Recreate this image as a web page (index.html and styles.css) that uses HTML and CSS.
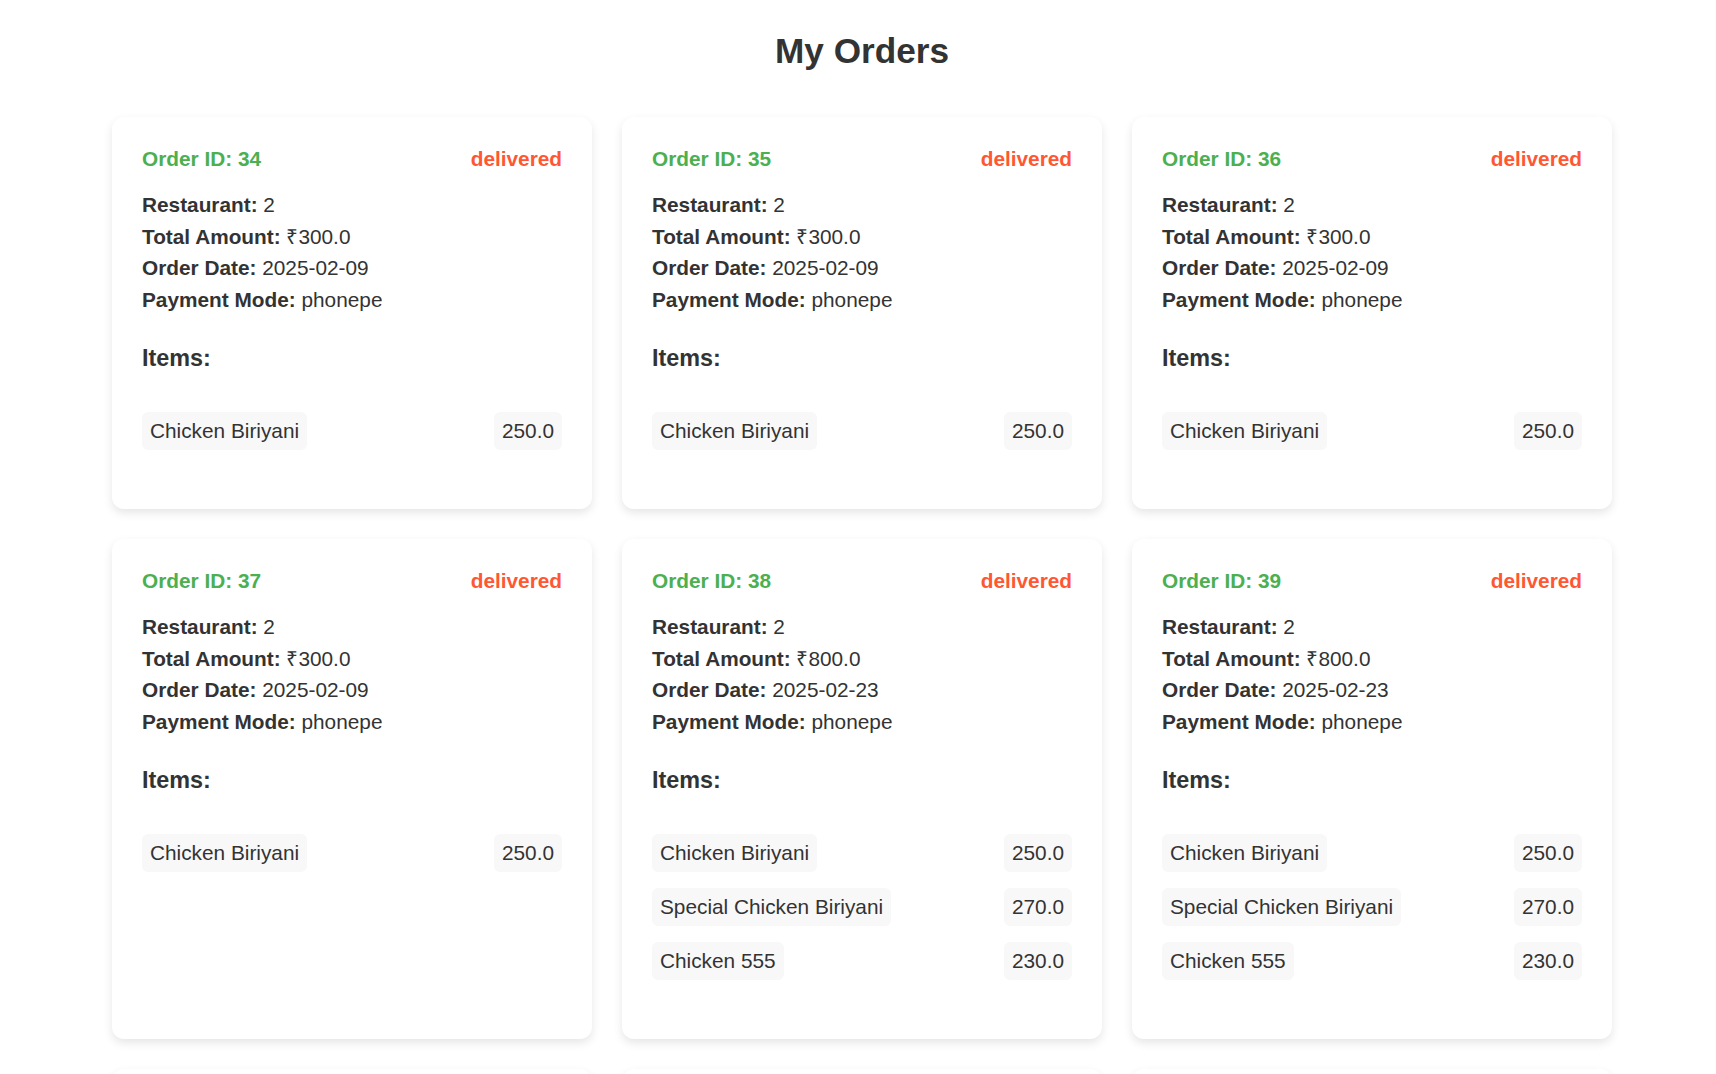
FILE: index.html
```html
<!DOCTYPE html>
<html lang="en">
<head>
<meta charset="utf-8">
<title>My Orders</title>
<link rel="stylesheet" href="styles.css">
</head>
<body>
<div class="page">
  <h1 class="title">My Orders</h1>
  <div class="orders">
    <div class="card">
      <div class="card-head"><span class="order-id">Order ID: 34</span><span class="status">delivered</span></div>
      <p class="info"><strong>Restaurant:</strong> 2</p>
      <p class="info"><strong>Total Amount:</strong> ₹300.0</p>
      <p class="info"><strong>Order Date:</strong> 2025-02-09</p>
      <p class="info"><strong>Payment Mode:</strong> phonepe</p>
      <h3 class="items-title">Items:</h3>
      <ul class="items">
        <li class="item"><span class="chip">Chicken Biriyani</span><span class="chip">250.0</span></li>
      </ul>
    </div>
    <div class="card">
      <div class="card-head"><span class="order-id">Order ID: 35</span><span class="status">delivered</span></div>
      <p class="info"><strong>Restaurant:</strong> 2</p>
      <p class="info"><strong>Total Amount:</strong> ₹300.0</p>
      <p class="info"><strong>Order Date:</strong> 2025-02-09</p>
      <p class="info"><strong>Payment Mode:</strong> phonepe</p>
      <h3 class="items-title">Items:</h3>
      <ul class="items">
        <li class="item"><span class="chip">Chicken Biriyani</span><span class="chip">250.0</span></li>
      </ul>
    </div>
    <div class="card">
      <div class="card-head"><span class="order-id">Order ID: 36</span><span class="status">delivered</span></div>
      <p class="info"><strong>Restaurant:</strong> 2</p>
      <p class="info"><strong>Total Amount:</strong> ₹300.0</p>
      <p class="info"><strong>Order Date:</strong> 2025-02-09</p>
      <p class="info"><strong>Payment Mode:</strong> phonepe</p>
      <h3 class="items-title">Items:</h3>
      <ul class="items">
        <li class="item"><span class="chip">Chicken Biriyani</span><span class="chip">250.0</span></li>
      </ul>
    </div>
    <div class="card">
      <div class="card-head"><span class="order-id">Order ID: 37</span><span class="status">delivered</span></div>
      <p class="info"><strong>Restaurant:</strong> 2</p>
      <p class="info"><strong>Total Amount:</strong> ₹300.0</p>
      <p class="info"><strong>Order Date:</strong> 2025-02-09</p>
      <p class="info"><strong>Payment Mode:</strong> phonepe</p>
      <h3 class="items-title">Items:</h3>
      <ul class="items">
        <li class="item"><span class="chip">Chicken Biriyani</span><span class="chip">250.0</span></li>
      </ul>
    </div>
    <div class="card">
      <div class="card-head"><span class="order-id">Order ID: 38</span><span class="status">delivered</span></div>
      <p class="info"><strong>Restaurant:</strong> 2</p>
      <p class="info"><strong>Total Amount:</strong> ₹800.0</p>
      <p class="info"><strong>Order Date:</strong> 2025-02-23</p>
      <p class="info"><strong>Payment Mode:</strong> phonepe</p>
      <h3 class="items-title">Items:</h3>
      <ul class="items">
        <li class="item"><span class="chip">Chicken Biriyani</span><span class="chip">250.0</span></li>
        <li class="item"><span class="chip">Special Chicken Biriyani</span><span class="chip">270.0</span></li>
        <li class="item"><span class="chip">Chicken 555</span><span class="chip">230.0</span></li>
      </ul>
    </div>
    <div class="card">
      <div class="card-head"><span class="order-id">Order ID: 39</span><span class="status">delivered</span></div>
      <p class="info"><strong>Restaurant:</strong> 2</p>
      <p class="info"><strong>Total Amount:</strong> ₹800.0</p>
      <p class="info"><strong>Order Date:</strong> 2025-02-23</p>
      <p class="info"><strong>Payment Mode:</strong> phonepe</p>
      <h3 class="items-title">Items:</h3>
      <ul class="items">
        <li class="item"><span class="chip">Chicken Biriyani</span><span class="chip">250.0</span></li>
        <li class="item"><span class="chip">Special Chicken Biriyani</span><span class="chip">270.0</span></li>
        <li class="item"><span class="chip">Chicken 555</span><span class="chip">230.0</span></li>
      </ul>
    </div>
    <div class="card">
      <div class="card-head"><span class="order-id">Order ID: 40</span><span class="status">delivered</span></div>
      <p class="info"><strong>Restaurant:</strong> 2</p>
      <p class="info"><strong>Total Amount:</strong> ₹800.0</p>
      <p class="info"><strong>Order Date:</strong> 2025-02-23</p>
      <p class="info"><strong>Payment Mode:</strong> phonepe</p>
      <h3 class="items-title">Items:</h3>
      <ul class="items">
        <li class="item"><span class="chip">Chicken Biriyani</span><span class="chip">250.0</span></li>
      </ul>
    </div>
    <div class="card">
      <div class="card-head"><span class="order-id">Order ID: 41</span><span class="status">delivered</span></div>
      <p class="info"><strong>Restaurant:</strong> 2</p>
      <p class="info"><strong>Total Amount:</strong> ₹800.0</p>
      <p class="info"><strong>Order Date:</strong> 2025-02-23</p>
      <p class="info"><strong>Payment Mode:</strong> phonepe</p>
      <h3 class="items-title">Items:</h3>
      <ul class="items">
        <li class="item"><span class="chip">Chicken Biriyani</span><span class="chip">250.0</span></li>
      </ul>
    </div>
    <div class="card">
      <div class="card-head"><span class="order-id">Order ID: 42</span><span class="status">delivered</span></div>
      <p class="info"><strong>Restaurant:</strong> 2</p>
      <p class="info"><strong>Total Amount:</strong> ₹800.0</p>
      <p class="info"><strong>Order Date:</strong> 2025-02-23</p>
      <p class="info"><strong>Payment Mode:</strong> phonepe</p>
      <h3 class="items-title">Items:</h3>
      <ul class="items">
        <li class="item"><span class="chip">Chicken Biriyani</span><span class="chip">250.0</span></li>
      </ul>
    </div>
  </div>
</div>
</body>
</html>
```

FILE: styles.css
```css
html, body {
  margin: 0;
  padding: 0;
  background: #ffffff;
}

body {
  font-family: "Liberation Sans", Arial, sans-serif;
  color: #333333;
}

.page {
  padding: 8px 0 40px 8px;
}

.title {
  margin: 23px 0 46px;
  font-size: 35.2px;
  line-height: 40px;
  font-weight: bold;
  text-align: center;
  color: #333333;
}

.orders {
  display: grid;
  grid-template-columns: repeat(3, 480px);
  gap: 30px;
  justify-content: center;
}

.card {
  background: #ffffff;
  border-radius: 12px;
  box-shadow: 0 4px 10px rgba(0, 0, 0, 0.1);
  padding: 30px;
}

.card-head {
  display: flex;
  justify-content: space-between;
  align-items: center;
  font-size: 20.8px;
  line-height: 24px;
  font-weight: bold;
  margin-bottom: 18px;
}

.order-id {
  color: #4caf50;
}

.status {
  color: #ff5733;
}

.info {
  margin: 0;
  font-size: 20.8px;
  line-height: 31.5px;
  color: #333333;
}

.info strong {
  font-weight: bold;
}

.items-title {
  margin: 30px 0 0;
  font-size: 23.4px;
  line-height: 27px;
  font-weight: bold;
}

.items {
  list-style: none;
  margin: 40px 0 29px;
  padding: 0;
  display: flex;
  flex-direction: column;
  gap: 16px;
}

.item {
  display: flex;
  justify-content: space-between;
  align-items: center;
}

.chip {
  background: #f8f8f8;
  border-radius: 6px;
  padding: 7px 8px;
  font-size: 20.8px;
  line-height: 24px;
  color: #333333;
}
```
